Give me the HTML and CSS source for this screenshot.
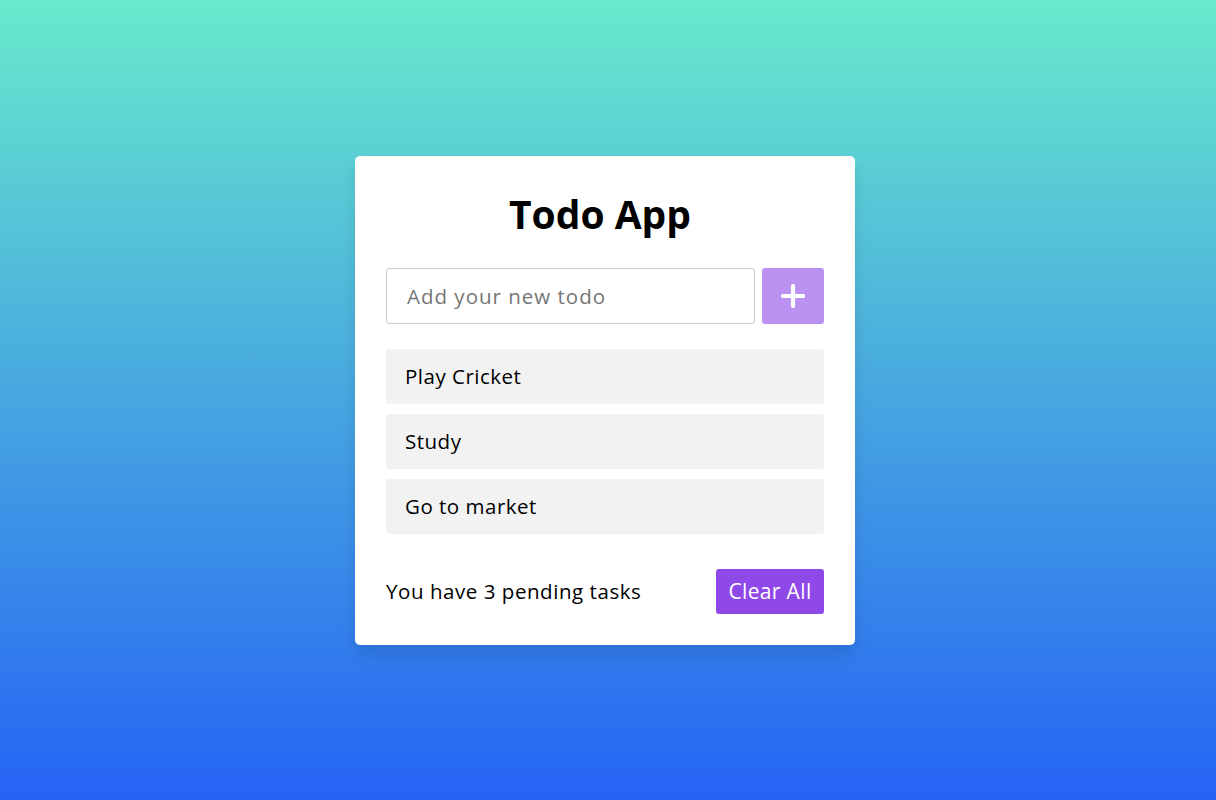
FILE: index.html
```html
<!DOCTYPE html>
<html lang="en">
<head>
<meta charset="UTF-8">
<title>Todo App</title>
<link rel="stylesheet" href="styles.css">
</head>
<body>
  <div class="wrapper">
    <h1 class="title">Todo App</h1>
    <div class="input-field">
      <input type="text" class="todo-input" placeholder="Add your new todo">
      <button class="add-btn" aria-label="Add">
        <svg width="24" height="24" viewBox="0 0 24 24"><path d="M12 2v20M2 12h20" stroke="#fff" stroke-width="4.2" stroke-linecap="round" fill="none"/></svg>
      </button>
    </div>
    <ul class="todo-list">
      <li class="todo-item">Play Cricket</li>
      <li class="todo-item">Study</li>
      <li class="todo-item">Go to market</li>
    </ul>
    <div class="footer">
      <span class="pending">You have 3 pending tasks</span>
      <button class="clear-btn">Clear All</button>
    </div>
  </div>
</body>
</html>
```
FILE: styles.css
```css
* {
  box-sizing: border-box;
}
html, body {
  margin: 0;
  height: 100%;
}
body {
  display: flex;
  align-items: center;
  justify-content: center;
  padding-right: 6px;
  background: linear-gradient(to bottom, #68eacc 0%, #2563f5 100%);
  font-family: "Open Sans", "Liberation Sans", sans-serif;
  color: #000;
}
.wrapper {
  width: 500px;
  background: #fff;
  border-radius: 5px;
  padding: 31px;
  box-shadow: 0 10px 16px rgba(0, 0, 0, 0.1);
}
.title {
  margin: 3px 0 31px;
  padding-right: 10px;
  text-align: center;
  font-size: 39px;
  line-height: 47px;
  font-weight: 700;
}
.input-field {
  display: flex;
  gap: 7px;
  height: 56px;
}
.todo-input {
  flex: 1;
  min-width: 0;
  height: 100%;
  border: 1px solid #ccc;
  border-radius: 3px;
  padding: 0 20px;
  font-family: inherit;
  font-size: 20.5px;
  letter-spacing: 1px;
  color: #000;
  outline: none;
}
.todo-input::placeholder {
  color: #757575;
}
.add-btn {
  width: 62px;
  height: 100%;
  border: none;
  border-radius: 3px;
  background: #8e49e8;
  opacity: 0.6;
  display: flex;
  align-items: center;
  justify-content: center;
  padding: 0;
}
.todo-list {
  list-style: none;
  margin: 25px 0 0;
  padding: 0;
  display: flex;
  flex-direction: column;
  gap: 10px;
}
.todo-item {
  height: 55px;
  display: flex;
  align-items: center;
  padding: 0 19px;
  background: #f2f2f2;
  border-radius: 3px;
  font-size: 20.5px;
  letter-spacing: 0.5px;
}
.footer {
  margin-top: 35px;
  display: flex;
  align-items: center;
  justify-content: space-between;
}
.pending {
  font-size: 20.5px;
  letter-spacing: 0.55px;
}
.clear-btn {
  height: 45px;
  width: 108px;
  border: none;
  border-radius: 3px;
  background: #8e49e8;
  color: #fff;
  font-family: inherit;
  font-size: 21px;
  letter-spacing: 0.35px;
  padding: 0;
}
```
